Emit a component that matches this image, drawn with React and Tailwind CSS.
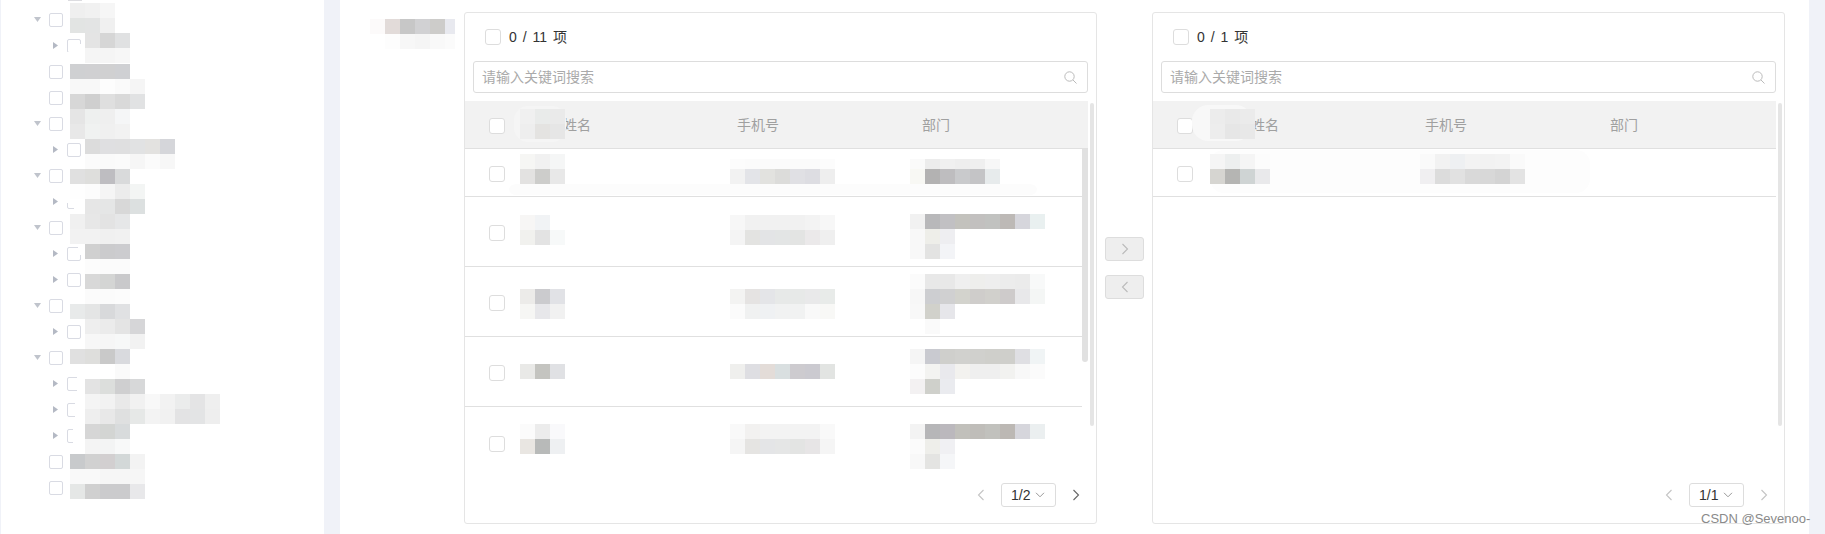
import React from "react";

const CELL = 15;

// the redacted bits of the screenshot, in page coordinates: [x, y, colours]
const treeCells = [
  [70, 3, ["#efefef", "#f1f1f1", "#f6f6f6"]],
  [70, 18, ["#e2e4e3", "#e3e4e4", "#f0f0f0"]],
  [85, 33, ["#e4e4e4", "#d6d6d6", "#e0e1e2"]],
  [85, 48, ["#f5f5f5", "#f5f5f5", "#f7f7f7"]],
  [70, 64, ["#cfd0d2", "#d0d0d2", "#d0d0d1", "#cfd0d3"]],
  [70, 79, ["#f8f8f8", "#f8f8f8", "#fdfdfd", "#fafafa", "#f5f5f5"]],
  [70, 94, ["#d7d7d7", "#cfcfcf", "#dfdfdf", "#d9d9d9", "#e1e2e3"]],
  [70, 109, ["#e5e5e5", "#eef0ef", "#efefef", "#f5f6f7"]],
  [70, 124, ["#e8e8e8", "#f0f2f1", "#f0f0f0", "#f2f2f2"]],
  [85, 139, ["#dcdcdc", "#dfdfe1", "#dfdfe0", "#e1e2e3", "#e3e2e0", "#d5d6da"]],
  [85, 154, ["#fbfbfb", "#fafafa", "#fbfbfb", "#f6f6f6", "#fbfbfb", "#f7f7f7"]],
  [70, 169, ["#e0e0e0", "#dededc", "#bebdc1", "#d9dadb"]],
  [70, 184, ["#fefefe", "#fcfcfc", "#f5f5f5", "#ececec", "#f3f5f4"]],
  [85, 199, ["#e6e6e6", "#e5e6e6", "#d8d8d8", "#dce0e0"]],
  [70, 214, ["#f0f0f0", "#e7e7e7", "#e3e3e3", "#e6e7e8"]],
  [70, 229, ["#f2f2f2", "#f2f2f2", "#f0f0f0", "#f1f1f1"]],
  [85, 244, ["#d0d0d0", "#cbcbcd", "#cccccf"]],
  [85, 259, ["#fcfcfc", "#fbfbfb", "#fbfbfb"]],
  [85, 274, ["#d8d8d8", "#d4d5d4", "#c9c9cb"]],
  [85, 289, ["#fbfbfb", "#fbfbfb", "#fcfcfc"]],
  [70, 304, ["#e8eaea", "#e4e5e5", "#d8d9db", "#e0e1e3"]],
  [85, 319, ["#eeeeee", "#ebebeb", "#e4e4e4", "#d6d6d8"]],
  [85, 334, ["#f7f7f7", "#f6f6f6", "#f7f8f8", "#f2f2f2"]],
  [70, 349, ["#e0e0e0", "#dededc", "#c9c9c9", "#d9dade"]],
  [115, 364, ["#fafafa"]],
  [85, 379, ["#e3e3e3", "#dcdedc", "#cfcfd0", "#d7d8d9"]],
  [85, 394, ["#f4f4f4", "#f2f2f2", "#e9e9e9", "#f1f1f1", "#f8f8f8", "#f2f2f2", "#ebecec", "#e4e4e5", "#efefef"]],
  [85, 409, ["#eeeeee", "#e8e8e8", "#dfe0e0", "#e6e8e7", "#f3f3f3", "#f1f1f1", "#e3e3e4", "#e3e4e5", "#eeeeee"]],
  [85, 424, ["#d6d6d6", "#d3d5d3", "#d8dbdc"]],
  [85, 439, ["#f4f4f4", "#f3f4f4", "#f8f9f9"]],
  [70, 454, ["#c8cacc", "#d1d1d1", "#d2cfd0", "#d3d8d8", "#f3f3f3"]],
  [70, 469, ["#f9f9f9", "#f9f9f9", "#f6f6f6", "#f6f6f6", "#f6f6f6"]],
  [70, 484, ["#e5e7e6", "#d0d0d0", "#cbcbcd", "#cbcbcd", "#e8e8ea"]],
];

// white smears over parts of the tree checkboxes: [x, y, w, h, colour]
const treeSmears = [
  [66, 52, 17, 5, "#ffffff"],
  [78, 44, 5, 9, "#ffffff"],
  [66, 194, 17, 9, "#ffffff"],
  [74, 194, 9, 17, "#ffffff"],
  [78, 246, 5, 9, "#ffffff"],
  [77, 376, 6, 17, "#ffffff"],
  [75, 402, 8, 17, "#ffffff"],
  [73, 428, 10, 17, "#ffffff"],
  [68, 0, 14, 1, "#dcdce0"],
  [127, 42, 2, 9, "#6b7a99"],
  [71, 122, 1, 6, "#c8a080"],
  [127, 248, 3, 1, "#6a9ad0"],
];

const labelCells = [
  [370, 19, ["#fcfafa", "#e2dbd9", "#c7c7c7", "#d1d1d3", "#cdccca", "#e8e9ef"]],
  [385, 34, ["#fdfdfd", "#f7f7f7", "#f5f5f5", "#f9f9f9", "#fbfbfb"]],
];

const leftCells = [
  [520, 109, ["#f0f0f0", "#e9ebea", "#eaeaea"]],
  [520, 124, ["#eeeeee", "#e4e3e1", "#e6e6e6"]],
  [520, 154, ["#f6f6f4", "#f1f1f1", "#f5f6f6"]],
  [520, 169, ["#e3e2e1", "#cdcdcb", "#e8e8e8"]],
  [730, 159, ["#fcfcfc", "#fbfbfb", "#fbfbfb", "#fbfbfb", "#fbfbfb", "#fbfbfb", "#fcfcfc"]],
  [730, 169, ["#f2f2f2", "#e3e4e8", "#e2e2df", "#dcdcda", "#e0e0e4", "#dddde2", "#eeeeee"]],
  [910, 159, ["#fafafa", "#ececec", "#f0f0f0", "#eeeeee", "#efefef", "#f7f7f7"]],
  [910, 169, ["#f8f8f4", "#b3b2b2", "#bebdbf", "#c9cacc", "#c4c4c6", "#e7ebec"]],
  [520, 215, ["#f7f6f5", "#f1f3f5"]],
  [520, 230, ["#f1f1ee", "#e3e3e3", "#f7f9f9"]],
  [730, 215, ["#f7f7f7", "#f1f1f1", "#f1f1f1", "#f1f1f1", "#f1f1f1", "#f3f3f3", "#f7f7f7"]],
  [730, 230, ["#f4f4f4", "#e3e3e1", "#e3e4e6", "#e3e5e5", "#e3e4e3", "#ebe9ea", "#efefef"]],
  [910, 214, ["#f1f1f1", "#b8b8ba", "#c1c0c3", "#c3c2bd", "#c2c0bf", "#c1c2c0", "#bdb9b6", "#d6d6dc", "#e9f0f0"]],
  [910, 229, ["#f8f8f8", "#eeeee9", "#eeeef1"]],
  [910, 244, ["#f8f8f8", "#e3e3e2", "#f3f4f7"]],
  [520, 289, ["#ecebe9", "#cbcbce", "#e1e2e6"]],
  [520, 304, ["#f6f6f4", "#e7e7ea", "#f1f1f1"]],
  [730, 289, ["#f3f3f2", "#e5e3e2", "#e4e5e8", "#e7e9e8", "#e7e9e8", "#e9e9ea", "#e8ebe9"]],
  [730, 304, ["#fbfbfb", "#f0f1f1", "#eff1f3", "#f1f2f2", "#f1f2f2", "#f9f9f9", "#f8f8f6"]],
  [910, 274, ["#fbfbfb", "#e8e8e8", "#e8e8e8", "#efefef", "#eeeeec", "#eeeeee", "#ececec", "#ebebeb", "#f8f9f9"]],
  [910, 289, ["#f7f7f7", "#cdced1", "#d0d0d1", "#d3d3cd", "#cfcdcb", "#d1d0cc", "#cecbcb", "#e8e8ea", "#f4f6f5"]],
  [910, 304, ["#f8f8f8", "#d1d1cb", "#e6e6ea"]],
  [925, 319, ["#fafafa"]],
  [520, 364, ["#e9e9e7", "#c4c4c0", "#e0e1e4"]],
  [730, 364, ["#efefed", "#dedee2", "#e3dcd8", "#d9dfe0", "#cdcbcf", "#cbcad0", "#e2e4e2"]],
  [910, 349, ["#f5f5f5", "#c9cad0", "#cfcfcc", "#d1d1ce", "#d0d0cd", "#cfcfcb", "#cfcfcb", "#dfdfe3", "#f0f4f5"]],
  [910, 364, ["#fcfcfc", "#f3f3f1", "#e9e9ed", "#f3f2ef", "#efefef", "#efefef", "#f2f2f0", "#f8f8f8", "#fbfbfb"]],
  [910, 379, ["#f3f1f2", "#cfd0cb", "#eaebef"]],
  [520, 424, ["#fbfbfb", "#ececec", "#f9f9fb"]],
  [520, 439, ["#e9e6e2", "#b8bab9", "#eef0f2"]],
  [730, 424, ["#f9f9f9", "#f2f1f0", "#f3f3f3", "#f3f3f3", "#f3f3f3", "#f3f3f3", "#f9f9f9"]],
  [730, 439, ["#f5f5f5", "#e5e4e2", "#e4e5e7", "#e5e6e6", "#e3e4e3", "#e7e5e6", "#f5f5f5"]],
  [910, 424, ["#f3f3f3", "#b6b6b8", "#bbb8bd", "#c1c0bb", "#bfbdb9", "#c1c1bd", "#bcb8b4", "#d6d6dc", "#ebeff0"]],
  [910, 439, ["#fbfbfb", "#eeeeea", "#f0f0f3"]],
  [910, 454, ["#f8f8f8", "#e4e4e2", "#f5f6f8"]],
];

const leftSmears = [
  [514, 106, 52, 36, "#f5f5f5", 14],
  [509, 184, 528, 11, "#fcfcfc", 8],
];

const rightCells = [
  [1210, 109, ["#ececec", "#e9e9e9", "#ebebeb"]],
  [1210, 124, ["#ededed", "#e6e6e6", "#e8e8e8"]],
  [1210, 154, ["#f5f5f5", "#edefef", "#f5f5f5", "#fcfcfc"]],
  [1210, 169, ["#d6d5d1", "#b5b5b3", "#cfd4d4", "#e9e9eb"]],
  [1420, 154, ["#fafafa", "#f2f2f2", "#eef0f2", "#f3f3f3", "#f2f2f2", "#f3f3f3", "#fafafa"]],
  [1420, 169, ["#f0eff1", "#dcdcdc", "#e1e1e1", "#d9d9d9", "#d8d8d8", "#d4d4d4", "#e3e3e3"]],
];

const rightSmears = [
  [1192, 105, 60, 36, "#f8f8f8", 16],
  [1210, 150, 380, 43, "#fdfdfd", 14],
];

const treeRows = [
  { level: 0, arrow: true },
  { level: 1, arrow: true },
  { level: 0 },
  { level: 0 },
  { level: 0, arrow: true },
  { level: 1, arrow: true },
  { level: 0, arrow: true },
  { level: 1, arrow: true },
  { level: 0, arrow: true },
  { level: 1, arrow: true },
  { level: 1, arrow: true },
  { level: 0, arrow: true },
  { level: 1, arrow: true },
  { level: 0, arrow: true },
  { level: 1, arrow: true },
  { level: 1, arrow: true },
  { level: 1, arrow: true },
  { level: 0 },
  { level: 0 },
];

function Mosaic({ cells, smears = [], x, y, width, height, className }) {
  return (
    <svg
      className={className}
      width={width}
      height={height}
      viewBox={`${x} ${y} ${width} ${height}`}
      shapeRendering="crispEdges"
    >
      {smears.map(([sx, sy, w, h, fill, r], i) => (
        <rect key={i} x={sx} y={sy} width={w} height={h} fill={fill} rx={r} shapeRendering="auto" />
      ))}
      {cells.map(([cx, cy, colors]) =>
        colors.map((fill, i) => (
          <rect key={`${cx}-${cy}-${i}`} x={cx + i * CELL} y={cy} width={CELL} height={CELL} fill={fill} />
        )),
      )}
    </svg>
  );
}

function Chevron({ dir, className }) {
  return (
    <svg className={className} width="10" height="12" viewBox="0 0 10 12" fill="none" stroke="currentColor" strokeWidth="1.1">
      <path d={dir === "left" ? "M7.5 1 L2.5 6 L7.5 11" : "M2.5 1 L7.5 6 L2.5 11"} />
    </svg>
  );
}

function TreeRow({ level, arrow }) {
  return (
    <div className={level === 0 ? "flex h-[26px] items-center pl-[33px]" : "flex h-[26px] items-center pl-[52px]"}>
      <div className={level === 0 ? "flex w-[15px] items-center" : "flex w-[14px] items-center"}>
        {arrow && level === 0 && (
          <svg className="mb-[1px]" width="7" height="5" viewBox="0 0 7 5">
            <polygon points="0,0 7,0 3.5,5" fill="#c0c4cc" />
          </svg>
        )}
        {arrow && level === 1 && (
          <svg className="mb-[2px]" width="5" height="7" viewBox="0 0 5 7">
            <polygon points="0,0 5,3.5 0,7" fill="#b4b9c4" />
          </svg>
        )}
      </div>
      <span className="h-[14px] w-[14px] rounded-[2px] border border-[#d9dbe3] bg-white" />
    </div>
  );
}

function Checkbox() {
  return <span className="mt-[3px] h-4 w-4 shrink-0 rounded-[3px] border border-[#dddddd] bg-white" />;
}

function TableRow({ height, last }) {
  return (
    <div className={`${height} ${last ? "" : "border-b border-[#e0e0e0]"} flex items-center pl-6`}>
      <Checkbox />
    </div>
  );
}

function TransferBox({ count, page, nextActive, overlay, children }) {
  return (
    <div className="relative flex h-[512px] w-[633px] shrink-0 flex-col rounded-[3px] border border-[#e5e5e5]">
      <div className="flex h-12 items-start gap-2 pl-5 pt-4">
        <span className="h-4 w-4 rounded-[3px] border border-[#dddddd]" />
        <span className="text-sm leading-4 text-[#333333] [word-spacing:2px]">{count}</span>
      </div>
      <div className="mx-2 flex h-8 items-center rounded-[3px] border border-[#dddddd] pl-2 pr-[10px]">
        <input
          readOnly
          placeholder="请输入关键词搜索"
          className="min-w-0 flex-1 bg-transparent text-sm outline-none placeholder:text-[#aaaaaa]"
        />
        <svg width="13" height="13" viewBox="0 0 13 13" fill="none" stroke="#bbbbbb" strokeWidth="1">
          <circle cx="5.5" cy="5.5" r="4.7" />
          <path d="M9 9 L12.5 12.5" />
        </svg>
      </div>
      <div className="mt-2 flex h-[374px]">
        <div className="w-[623px] overflow-hidden">
          <div className="grid h-12 grid-cols-[272px_185px_1fr] items-center border-b border-[#e0e0e0] bg-[#f2f2f2] text-sm text-[#a0a0a0]">
            <div className="flex items-center pl-6">
              <Checkbox />
              <span className="ml-[58px]">姓名</span>
            </div>
            <span>手机号</span>
            <span>部门</span>
          </div>
          {children}
        </div>
        <div className="ml-[2px] mt-[2px] h-[323px] w-1 rounded-full bg-[#e5e5e5]" />
      </div>
      <div className="mt-2 flex items-center justify-end gap-[15px] pr-[15px]">
        <Chevron dir="left" className="text-[#c4c4c4]" />
        <div className="flex h-6 w-[55px] items-center gap-[5px] rounded-[3px] border border-[#dddddd] pl-[9px] text-sm text-[#333333]">
          {page}
          <svg width="10" height="6" viewBox="0 0 10 6" fill="none" stroke="#999999" strokeWidth="1">
            <path d="M1 0.8 L5 4.8 L9 0.8" />
          </svg>
        </div>
        <Chevron dir="right" className={nextActive ? "text-[#666666]" : "text-[#c4c4c4]"} />
      </div>
      {overlay}
    </div>
  );
}

export default function App() {
  return (
    <div className="relative flex h-[534px] w-[1825px] overflow-hidden bg-[#f0f2f8] pl-px font-['Liberation_Sans','Noto_Sans_CJK_SC',sans-serif]">
      <div className="relative w-[323px] shrink-0 bg-white pt-[7px]">
        {treeRows.map((row, i) => (
          <TreeRow key={i} level={row.level} arrow={row.arrow} />
        ))}
        <Mosaic
          className="absolute left-0 top-0"
          cells={treeCells}
          smears={treeSmears}
          x={1}
          y={0}
          width={323}
          height={534}
        />
      </div>

      <div className="relative ml-4 flex w-[1469px] shrink-0 bg-white pl-[124px] pt-3">
        <Mosaic
          className="absolute left-[30px] top-[19px]"
          cells={labelCells}
          x={370}
          y={19}
          width={85}
          height={30}
        />
        <TransferBox
          count="0 / 11 项"
          page="1/2"
          nextActive
          overlay={
            <Mosaic
              className="absolute -left-px -top-px"
              cells={leftCells}
              smears={leftSmears}
              x={464}
              y={12}
              width={633}
              height={512}
            />
          }
        >
          <div className="flex">
            <div className="w-[617px]">
              <TableRow height="h-12" />
              <TableRow height="h-[70px]" />
              <TableRow height="h-[70px]" />
              <TableRow height="h-[70px]" />
              <TableRow height="h-[70px]" last />
            </div>
            <div className="h-[213px] w-[6px] rounded-b-full bg-[#e1e1e1]" />
          </div>
        </TransferBox>

        <div className="flex w-[55px] shrink-0 flex-col gap-[14px] pl-2 pt-[225px]">
          <button className="flex h-6 w-[39px] items-center justify-center rounded-[3px] border border-[#dddddd] bg-[#eeeeee] text-[#bbbbbb]">
            <Chevron dir="right" />
          </button>
          <button className="flex h-6 w-[39px] items-center justify-center rounded-[3px] border border-[#dddddd] bg-[#eeeeee] text-[#bbbbbb]">
            <Chevron dir="left" />
          </button>
        </div>

        <TransferBox
          count="0 / 1 项"
          page="1/1"
          overlay={
            <Mosaic
              className="absolute -left-px -top-px"
              cells={rightCells}
              smears={rightSmears}
              x={1152}
              y={12}
              width={633}
              height={512}
            />
          }
        >
          <TableRow height="h-12" />
        </TransferBox>
      </div>

      <span className="absolute left-[1701px] top-[511px] text-[13px] leading-4 text-[#8a8a8a]">CSDN @Sevenoo-</span>
    </div>
  );
}
